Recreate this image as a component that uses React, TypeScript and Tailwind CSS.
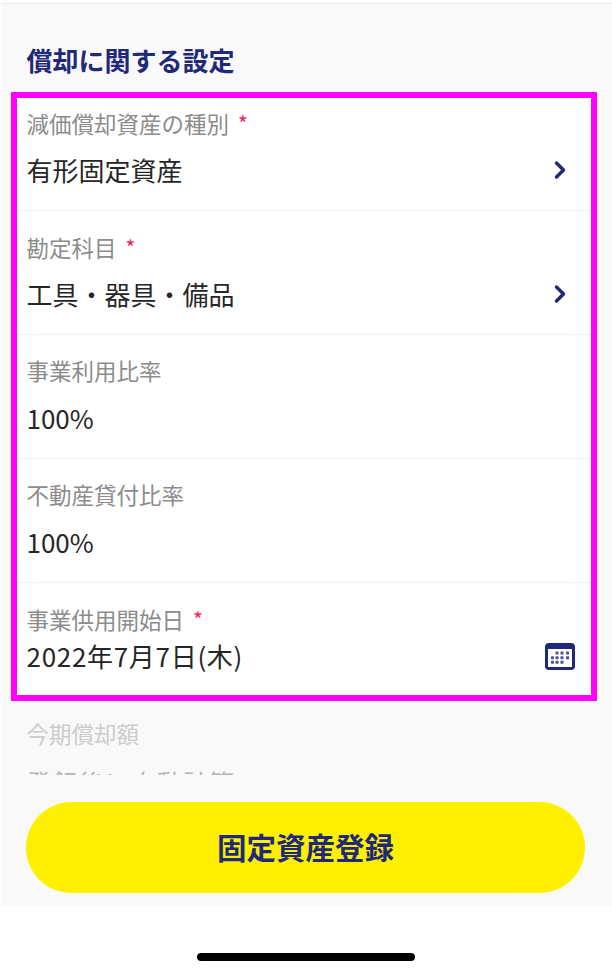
import { ChevronRight } from "lucide-react";

const font = { fontFamily: '"Noto Sans CJK JP", "Noto Sans", sans-serif' };

function CalendarIcon() {
  const dots = [
    [12, 10], [17, 10], [22.5, 10],
    [7.5, 14.7], [12, 14.7], [17, 14.7], [22.5, 14.7],
    [7.5, 19.3], [12, 19.3], [17, 19.3],
  ];
  return (
    <svg width="30" height="27" viewBox="0 0 30 27" className="shrink-0 mr-[6px]">
      <rect x="0" y="0" width="30" height="27" rx="4" fill="#1e2a78" />
      <rect x="3" y="6" width="24" height="18" fill="#ffffff" />
      {dots.map(([cx, cy]) => (
        <rect key={`${cx}-${cy}`} x={cx - 1.5} y={cy - 1.5} width="3" height="3" rx="0.5" fill="#1e2a78" opacity="0.8" />
      ))}
    </svg>
  );
}

function Row({ label, value, required, arrow, calendar, className, valueClass }: {
  label: string;
  value: string;
  required?: boolean;
  arrow?: boolean;
  calendar?: boolean;
  className: string;
  valueClass: string;
}) {
  return (
    <div className={`pl-[9.5px] pr-[10px] ${className}`}>
      <div className="flex items-center h-6 text-[22.5px] leading-6 text-[#8c8c8c]">
        <span>{label}</span>
        {required && <span className="ml-[9px] text-[21px] text-[#f5215a]">*</span>}
      </div>
      <div className={`flex items-center justify-between h-[30px] text-[26px] leading-[30px] text-[#262626] ${valueClass}`}>
        <span>{value}</span>
        {arrow && <ChevronRight size={28} strokeWidth={3} className="text-[#1e2a78] mr-[7px]" />}
        {calendar && <CalendarIcon />}
      </div>
    </div>
  );
}

export default function App() {
  return (
    <div className="w-[612px] h-[976px] bg-white overflow-hidden flex flex-col" style={font}>
      <div className="h-[3px] shrink-0" />
      <div className="h-[903px] shrink-0 bg-[#f9f9f9] border-t border-[#ececec] ml-px flex flex-col">
        <h2 className="ml-[25.5px] mt-[37px] h-[38px] leading-[38px] text-[26px] font-bold text-[#1e2a78]">償却に関する設定</h2>
        <div className="mt-[13px] ml-[10px] w-[586px] border-[6px] border-[#ff00ff] bg-white">
          <Row label="減価償却資産の種別" required arrow value="有形固定資産" className="h-[113px] pt-[13px] border-b border-[#efefef]" valueClass="mt-[20px]" />
          <Row label="勘定科目" required arrow value="工具・器具・備品" className="h-[124px] pt-[24px] border-b border-[#efefef]" valueClass="mt-[20px]" />
          <Row label="事業利用比率" value="100%" className="h-[124px] pt-[23px] border-b border-[#efefef]" valueClass="mt-[21px]" />
          <Row label="不動産貸付比率" value="100%" className="h-[124px] pt-[23px] border-b border-[#efefef]" valueClass="mt-[21px]" />
          <Row label="事業供用開始日" required calendar value="2022年7月7日(木)" className="h-[112px] pt-[24px] [&>div:last-child>span]:tracking-[0.7px]" valueClass="mt-[10px]" />
        </div>
        <div className="ml-[25.5px] h-[74px] overflow-hidden pt-[20px]">
          <div className="h-6 leading-6 text-[22.5px] text-[#cccccc]">今期償却額</div>
          <div className="mt-[23px] h-[30px] leading-[30px] text-[26px] text-[#b5b5b5]">登録後に自動計算</div>
        </div>
        <button className="mt-[27px] ml-[25px] w-[559px] h-[91px] shrink-0 rounded-full bg-[#fff000] pb-[2px] text-[29.5px] font-bold text-[#1e2a78]">
          固定資産登録
        </button>
      </div>
      <div className="flex-1 flex justify-center pt-[47px]">
        <div className="w-[218px] h-2 rounded-full bg-black" />
      </div>
    </div>
  );
}
